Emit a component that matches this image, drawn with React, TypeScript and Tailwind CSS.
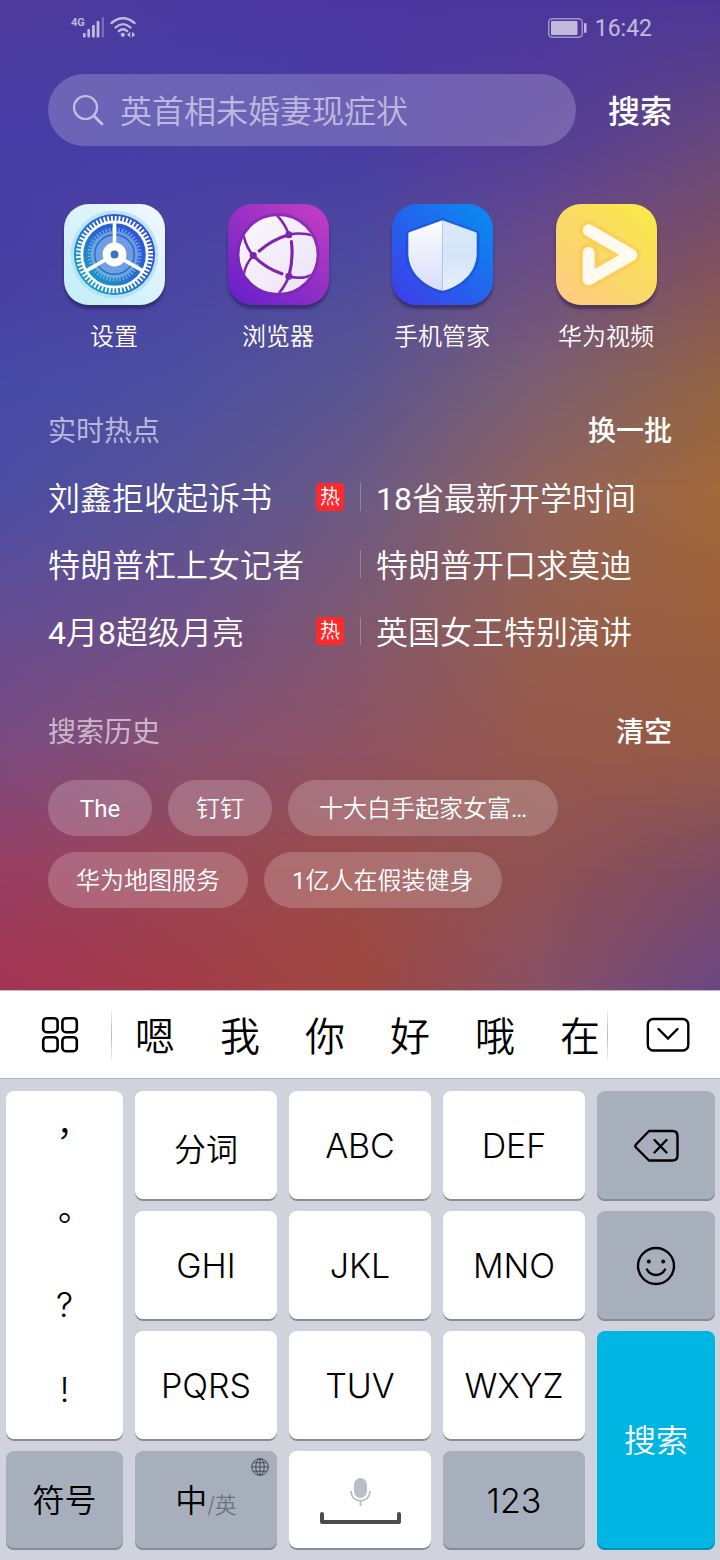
import type { CSSProperties, ReactNode } from "react";

/* Colour mesh of the wallpaper: each row is a horizontal gradient that fades into the next one. */
const mesh = [
  { at: 0, colors: "#4f3d9c, #4a39a0, #4a37a0, #4b379d, #4c3798" },
  { at: 13, colors: "#493ca6, #483ea6, #4a3ba3, #533d99, #64477f" },
  { at: 26, colors: "#493ea3, #4a44a3, #4c4a9f, #6a4c87, #80515f" },
  { at: 39, colors: "#474aa6, #4c4ea0, #5c5590, #7c5f70, #936542" },
  { at: 50, colors: "#4c4ca3, #575397, #6b5a84, #90635c, #a2683a" },
  { at: 63, colors: "#654d92, #6e5088, #80586f, #965f50, #9c603c" },
  { at: 76, colors: "#7c4b80, #87506f, #8f5262, #96584c, #965a45" },
  { at: 88, colors: "#983f62, #9a4555, #9a4c4a, #8f5253, #7d4c66" },
  { at: 100, colors: "#a33354, #a33c48, #a04840, #875065, #6a4684" },
];

function Wallpaper() {
  return (
    <div aria-hidden="true" className="absolute inset-0 -z-10">
      {mesh.map((row, i) => {
        const style: CSSProperties = { backgroundImage: `linear-gradient(to right, ${row.colors})` };
        if (i > 0) {
          const mask = `linear-gradient(to bottom, transparent ${mesh[i - 1].at}%, black ${row.at}%)`;
          style.maskImage = mask;
          style.WebkitMaskImage = mask;
        }
        return <div key={row.at} className="absolute inset-0" style={style} />;
      })}
    </div>
  );
}

/* Sets Latin letters and digits in regular weight beside the lighter Chinese text. */
function Mixed({ text }: { text: string }) {
  return (
    <>
      {text.split(/([A-Za-z0-9…]+)/).map((part, i) =>
        i % 2 === 1 ? (
          <span key={i} className="font-normal">{part}</span>
        ) : (
          part
        ),
      )}
    </>
  );
}

function StatusBar() {
  return (
    <header className="flex h-14 items-center justify-between pr-[68px] pl-[70px] text-white/65">
      <svg width="66" height="24" viewBox="0 0 66 24" fill="currentColor" role="img" aria-label="4G">
        <text x="1" y="10" fontSize="11" fontWeight="600" fontFamily="Roboto, sans-serif">4G</text>
        <rect x="13" y="17" width="2.6" height="4.5" rx="1" />
        <rect x="17.4" y="13" width="2.6" height="8.5" rx="1" />
        <rect x="22" y="9" width="2.8" height="12.5" rx="1" />
        <rect x="26.6" y="5" width="2.8" height="16.5" rx="1" />
        <rect x="31.8" y="1" width="2.2" height="20.5" rx="1" opacity="0.4" />
        <g fill="none" stroke="currentColor" strokeWidth="2.3" strokeLinecap="round">
          <path d="M41.5 7Q53 -2.5 64.5 7" />
          <path d="M45.5 11.5Q53 4.8 60.5 11.5" />
          <path d="M48.8 15.2Q53 11.2 57.2 15.2" />
        </g>
        <circle cx="52.8" cy="18.8" r="2.1" />
        <path d="M60.3 15.8v5.8l-3.2-2.9zM62 15.8v5.8l3.2-2.9z" />
      </svg>
      <div className="flex items-center gap-2">
        <svg width="39" height="20" viewBox="0 0 39 20" role="img" aria-label="电量">
          <rect x="0.75" y="0.75" width="33.5" height="18.5" rx="3.5" fill="none" stroke="currentColor" strokeWidth="1.5" opacity="0.7" />
          <rect x="3" y="3" width="26.5" height="14" rx="1" fill="currentColor" />
          <rect x="36" y="5" width="2.5" height="10" rx="1.2" fill="currentColor" />
        </svg>
        <span className="pt-0.5 text-[23px] leading-8 font-normal">16:42</span>
      </div>
    </header>
  );
}

const spin = [0, 120, 240];

function SettingsIcon() {
  return (
    <svg viewBox="0 0 102 102" className="size-full" aria-hidden="true">
      <defs>
        <linearGradient id="set-bg" x1="1" y1="0" x2="0" y2="1">
          <stop offset="0" stopColor="#f2f7fe" />
          <stop offset="1" stopColor="#c2eef8" />
        </linearGradient>
        <linearGradient id="set-disc" x1="0.9" y1="0.1" x2="0.15" y2="0.9">
          <stop offset="0" stopColor="#2f4be0" />
          <stop offset="0.5" stopColor="#2769cd" />
          <stop offset="1" stopColor="#16a5c6" />
        </linearGradient>
      </defs>
      <rect width="102" height="102" rx="25" fill="url(#set-bg)" />
      <circle cx="51" cy="51" r="44.5" fill="#abdcf5" opacity="0.65" />
      <circle cx="51" cy="51" r="41" fill="url(#set-disc)" />
      <circle cx="51" cy="51" r="36.5" fill="none" stroke="#fff" strokeWidth="5" strokeDasharray="1.900 1.922" />
      <circle cx="51" cy="51" r="33" fill="none" stroke="#fff" strokeWidth="2.8" />
      <g fill="none" stroke="#a9cdf0" opacity="0.55">
        <circle cx="51" cy="51" r="25.5" strokeWidth="3.6" strokeDasharray="1.600 1.738" />
        <circle cx="51" cy="51" r="22" strokeWidth="3.6" />
      </g>
      <circle cx="51" cy="51" r="19.5" fill="#8aaeea" opacity="0.75" />
      <circle cx="51" cy="51" r="20" fill="none" stroke="#2869cb" strokeWidth="1.2" />
      {spin.map((a) => (
        <path key={a} d="M51 51V18" stroke="#fff" strokeWidth="3.6" transform={`rotate(${a} 51 51)`} />
      ))}
      <circle cx="51" cy="51" r="12" fill="#fff" />
      <circle cx="51" cy="51" r="4" fill="#3e72ba" />
    </svg>
  );
}

function BrowserIcon() {
  return (
    <svg viewBox="0 0 102 102" className="size-full" aria-hidden="true">
      <defs>
        <linearGradient id="web-bg" x1="0.9" y1="0" x2="0.1" y2="1">
          <stop offset="0" stopColor="#c43cc4" />
          <stop offset="0.5" stopColor="#9430c4" />
          <stop offset="1" stopColor="#6820cc" />
        </linearGradient>
        <linearGradient id="web-ball" x1="0" y1="0" x2="1" y2="1">
          <stop offset="0" stopColor="#fdf8fe" />
          <stop offset="1" stopColor="#eae2f7" />
        </linearGradient>
        <clipPath id="web-clip">
          <circle cx="50.5" cy="51" r="39" />
        </clipPath>
      </defs>
      <rect width="102" height="102" rx="25" fill="url(#web-bg)" />
      <circle cx="50.5" cy="51" r="42" fill="#7424b0" opacity="0.55" />
      <circle cx="50.5" cy="51" r="39" fill="url(#web-ball)" />
      <g clipPath="url(#web-clip)" stroke="#7d25b0" fill="none" strokeLinecap="round">
        <path d="M49 11C55 17 59 24 61.5 31" strokeWidth="2.6" />
        <path d="M61.5 31C70 29 78 29.5 87 32" strokeWidth="2.6" />
        <path d="M61.5 31C51 34 41 39 31.5 47.5" strokeWidth="3.2" />
        <path d="M16 33C18 41 21 47 25.5 52" strokeWidth="2.6" />
        <path d="M25.5 52C21 57 17 64 16 71" strokeWidth="2.6" />
        <path d="M25.5 52C34 61 44 67 54.5 70.5" strokeWidth="3.2" />
        <path d="M64 38C65.5 50 64.5 62 61.5 73" strokeWidth="3.2" />
        <path d="M61.5 73C70 75.5 79 74.5 86 71" strokeWidth="2.6" />
        <path d="M61.5 73C59 80 55 86 50 92" strokeWidth="2.6" />
      </g>
      <g fill="#7d25b0">
        <circle cx="61.5" cy="31" r="3.6" />
        <circle cx="25.5" cy="52" r="3.6" />
        <circle cx="61.5" cy="73" r="3.6" />
      </g>
    </svg>
  );
}

function ShieldIcon() {
  return (
    <svg viewBox="0 0 102 102" className="size-full" aria-hidden="true">
      <defs>
        <linearGradient id="sh-bg" x1="0.9" y1="0.1" x2="0.1" y2="0.9">
          <stop offset="0" stopColor="#0c86f0" />
          <stop offset="1" stopColor="#3a43ea" />
        </linearGradient>
        <linearGradient id="sh-l" x1="0" y1="0" x2="0" y2="1">
          <stop offset="0" stopColor="#fcfdff" />
          <stop offset="1" stopColor="#d8dcf8" />
        </linearGradient>
        <linearGradient id="sh-r" x1="0" y1="0" x2="0" y2="1">
          <stop offset="0" stopColor="#dbe9f9" />
          <stop offset="0.5" stopColor="#d5e5f8" />
          <stop offset="1" stopColor="#e8effb" />
        </linearGradient>
      </defs>
      <rect width="102" height="102" rx="25" fill="url(#sh-bg)" />
      <path
        d="M51 16.5L84.5 29Q86 29.5 86 31V50C86 70 68 84 51 88C34 84 16 70 16 50V31Q16 29.5 17.5 29Z"
        fill="#1646c8"
        stroke="#1646c8"
        strokeWidth="5"
        strokeLinejoin="round"
        opacity="0.4"
      />
      <path d="M51 16.5L17.5 28.5Q16.5 29 16.5 30V50C16.5 70 34 84 51 87.5Z" fill="url(#sh-l)" />
      <path d="M51 16.5L84.5 28.5Q85.5 29 85.5 30V50C85.5 70 68 84 51 87.5Z" fill="url(#sh-r)" />
    </svg>
  );
}

function VideoIcon() {
  const play = "M33 26.5L76 51.5L33 76V49.5";
  return (
    <svg viewBox="0 0 102 102" className="size-full" aria-hidden="true">
      <defs>
        <linearGradient id="vd-bg" x1="0.9" y1="0.1" x2="0.1" y2="1">
          <stop offset="0" stopColor="#f8e84c" />
          <stop offset="1" stopColor="#fdcb82" />
        </linearGradient>
      </defs>
      <rect width="102" height="102" rx="25" fill="url(#vd-bg)" />
      <g fill="none" strokeLinecap="round" strokeLinejoin="round">
        <path d={play} stroke="#fbc850" strokeWidth="20" opacity="0.6" />
        <path d={play} stroke="#fffaf0" strokeWidth="12" />
      </g>
    </svg>
  );
}

const apps: { name: string; icon: ReactNode }[] = [
  { name: "设置", icon: <SettingsIcon /> },
  { name: "浏览器", icon: <BrowserIcon /> },
  { name: "手机管家", icon: <ShieldIcon /> },
  { name: "华为视频", icon: <VideoIcon /> },
];

const topics = [
  { left: "刘鑫拒收起诉书", hot: true, right: "18省最新开学时间" },
  { left: "特朗普杠上女记者", hot: false, right: "特朗普开口求莫迪" },
  { left: "4月8超级月亮", hot: true, right: "英国女王特别演讲" },
];

function SearchBar() {
  return (
    <form className="flex items-center gap-8 px-12 pt-[18px]" onSubmit={(e) => e.preventDefault()}>
      <label className="flex h-18 min-w-0 flex-1 items-center gap-4 rounded-full bg-white/20 px-6">
        <svg width="32" height="32" viewBox="0 0 32 32" fill="none" stroke="#c4bedf" strokeWidth="2.2" strokeLinecap="round" className="shrink-0" aria-hidden="true">
          <circle cx="13.5" cy="13.5" r="11.5" />
          <path d="M22 22L30 30" strokeWidth="2.8" />
        </svg>
        <input
          type="text"
          aria-label="搜索内容"
          placeholder="英首相未婚妻现症状"
          className="w-full min-w-0 bg-transparent pt-1 text-[32px] leading-10 text-white outline-none placeholder:text-white/55"
        />
      </label>
      <button type="submit" className="pt-1 text-[32px] leading-10 font-medium">搜索</button>
    </form>
  );
}

function HotTopics() {
  return (
    <section className="px-12 pt-[57px]">
      <div className="flex items-center justify-between text-[28px] leading-10">
        <h2 className="font-normal text-white/60">实时热点</h2>
        <button type="button" className="font-medium">换一批</button>
      </div>
      <ul className="pt-[13px] text-[32px] leading-10">
        {topics.map((t) => (
          <li key={t.left} className="grid h-[67px] grid-cols-2 items-center">
            <div className="flex items-center justify-between pr-4">
              <a href="#topic" className="truncate"><Mixed text={t.left} /></a>
              {t.hot && (
                <span className="mb-1 flex size-7 items-center justify-center rounded bg-[#fa2a2d] text-xl leading-7">热</span>
              )}
            </div>
            <div className="flex items-center gap-[15px]">
              <span className="mb-1 h-7 w-px bg-white/25" />
              <a href="#topic" className="truncate"><Mixed text={t.right} /></a>
            </div>
          </li>
        ))}
      </ul>
    </section>
  );
}

function History() {
  const chip = "h-14 rounded-full bg-white/20 px-7 pt-0.5 text-2xl";
  return (
    <section className="px-12 pt-[47px] pb-[82px]">
      <div className="flex items-center justify-between text-[28px] leading-10">
        <h2 className="font-normal text-white/60">搜索历史</h2>
        <button type="button" className="font-medium">清空</button>
      </div>
      <div className="flex flex-wrap gap-4 pt-[27px]">
        <button type="button" className={`${chip} min-w-[104px]`}><Mixed text="The" /></button>
        <button type="button" className={chip}>钉钉</button>
        <button type="button" className={`${chip} w-[270px] truncate`}><Mixed text="十大白手起家女富…" /></button>
        <button type="button" className={chip}>华为地图服务</button>
        <button type="button" className={chip}><Mixed text="1亿人在假装健身" /></button>
      </div>
    </section>
  );
}

function CandidateBar() {
  return (
    <div className="flex h-[89px] items-center border-t border-b border-t-[#c9b8c8] border-b-[#b4b6bd] bg-white">
      <button type="button" aria-label="菜单" className="flex h-full w-[111px] items-center justify-center pl-2">
        <svg width="38" height="38" viewBox="0 0 38 38" fill="none" stroke="#000" strokeWidth="2.6" aria-hidden="true">
          <rect x="2.2" y="2.2" width="14.4" height="14" rx="3.5" />
          <rect x="21.4" y="2.2" width="14.4" height="14" rx="3.5" />
          <rect x="2.2" y="21.2" width="14.4" height="14" rx="3.5" />
          <rect x="21.4" y="21.2" width="14.4" height="14" rx="3.5" />
        </svg>
      </button>
      <span className="h-[50px] w-px bg-linear-to-b from-[#c8c8c8]/30 via-[#b8b8b8] to-[#c8c8c8]/30" />
      <div className="flex flex-1 justify-between pt-1.5 pr-[7px] pl-[23px] text-[40px] leading-[56px]">
        {["嗯", "我", "你", "好", "哦", "在"].map((c) => (
          <button type="button" key={c}>{c}</button>
        ))}
      </div>
      <span className="h-[50px] w-px bg-linear-to-b from-[#c8c8c8]/30 via-[#b8b8b8] to-[#c8c8c8]/30" />
      <button type="button" aria-label="收起键盘" className="flex h-full w-28 items-center justify-center pl-2">
        <svg width="44" height="36" viewBox="0 0 44 36" fill="none" stroke="#000" strokeWidth="2.4" strokeLinecap="round" aria-hidden="true">
          <rect x="1.8" y="2" width="40.5" height="31.5" rx="5.5" />
          <path d="M12.5 12L22 21.5L31.5 12" />
        </svg>
      </button>
    </div>
  );
}

function Key({ children, label, className }: { children: ReactNode; label?: string; className: string }) {
  return (
    <button
      type="button"
      aria-label={label}
      className={`relative flex items-center justify-center rounded-lg shadow-[inset_0_-2px_0_#878b95] ${className}`}
    >
      {children}
    </button>
  );
}

const white = "bg-white";
const grey = "bg-[#a8afbc]";

function Keyboard() {
  return (
    <div className="grid grid-cols-[117fr_142fr_142fr_142fr_118fr] grid-rows-[110px_110px_110px_99px] gap-x-3 gap-y-[10px] bg-[#d0d3dc] pt-3 pr-[5px] pb-[10px] pl-[6px] font-[Inter,'Noto_Sans_CJK_SC',sans-serif] text-[34px] leading-10 font-[350]">
      <div className="row-span-3 grid grid-rows-4 rounded-lg bg-white pb-2 font-[Inter,'Noto_Sans_CJK_TC',sans-serif] shadow-[inset_0_-2px_0_#878b95]">
        {["，", "。", "?", "!"].map((c) => (
          <button type="button" key={c} lang="zh-TW">{c}</button>
        ))}
      </div>
      <Key className={`${white} pt-2 text-[32px]`}>分词</Key>
      <Key className={white}>ABC</Key>
      <Key className={white}>DEF</Key>
      <Key className={grey} label="删除">
        <svg width="46" height="34" viewBox="0 0 46 34" fill="none" stroke="#000" strokeWidth="2.4" strokeLinecap="round" strokeLinejoin="round" aria-hidden="true">
          <path d="M16 2H39.5Q44.5 2 44.5 7V26.5Q44.5 31.5 39.5 31.5H16L3 18.5Q1.5 17 3 15.5Z" />
          <path d="M21.5 11L33.5 23.5M33.5 11L21.5 23.5" />
        </svg>
      </Key>
      <Key className={white}>GHI</Key>
      <Key className={white}>JKL</Key>
      <Key className={white}>MNO</Key>
      <Key className={grey} label="表情">
        <svg width="40" height="40" viewBox="0 0 40 40" fill="none" stroke="#000" strokeWidth="2.4" strokeLinecap="round" aria-hidden="true">
          <circle cx="20" cy="20" r="18" />
          <path d="M11 23.5Q14 29 20 29T29 23.5" />
          <circle cx="12.8" cy="15.5" r="2" fill="#000" stroke="none" />
          <circle cx="27.2" cy="15.5" r="2" fill="#000" stroke="none" />
        </svg>
      </Key>
      <Key className={white}>PQRS</Key>
      <Key className={white}>TUV</Key>
      <Key className={white}>WXYZ</Key>
      <button
        type="button"
        className="row-span-2 rounded-lg bg-[#00b5e2] text-[32px] text-white shadow-[inset_0_-2px_0_#0a91b6]"
      >
        搜索
      </button>
      <Key className={`${grey} text-[32px]`}>符号</Key>
      <Key className={`${grey} text-[32px]`}>
        <span>中</span>
        <span className="pt-2 text-[22px] text-[#6e737d]">/英</span>
        <svg width="18" height="18" viewBox="0 0 18 18" fill="none" stroke="#444a55" strokeWidth="1" className="absolute top-[7px] right-2" aria-hidden="true">
          <circle cx="9" cy="9" r="8.3" />
          <ellipse cx="9" cy="9" rx="4.2" ry="8.3" />
          <path d="M9 .7V17.3M.7 9H17.3M2.2 4.8H15.8M2.2 13.2H15.8" />
        </svg>
      </Key>
      <Key className={white} label="空格">
        <svg width="82" height="48" viewBox="0 0 82 48" fill="none" aria-hidden="true">
          <rect x="35" y="1" width="13" height="20" rx="6.5" fill="#b9bec8" />
          <path d="M32 14C32 27 51 27 51 14M41.5 24V29" stroke="#b9bec8" strokeWidth="1.8" />
          <path d="M3 37V45H80V37" stroke="#4b4b4d" strokeWidth="4" strokeLinecap="round" strokeLinejoin="round" />
        </svg>
      </Key>
      <Key className={grey}>123</Key>
    </div>
  );
}

export default function App() {
  return (
    <div className="min-h-screen bg-[#d0d3dc] font-[Roboto,'Noto_Sans_CJK_SC',sans-serif] font-[350] text-black">
      <main className="relative isolate text-white">
        <Wallpaper />
        <StatusBar />
        <SearchBar />
        <nav className="grid grid-cols-4 px-8 pt-[58px]">
          {apps.map((app) => (
            <a key={app.name} href="#app" className="flex flex-col items-center gap-[14px]">
              <span className="size-[101px] rounded-[25px] shadow-[0_4px_3px_rgba(20,15,60,0.45)]">{app.icon}</span>
              <span className="text-2xl leading-9">{app.name}</span>
            </a>
          ))}
        </nav>
        <HotTopics />
        <History />
      </main>
      <CandidateBar />
      <Keyboard />
    </div>
  );
}
